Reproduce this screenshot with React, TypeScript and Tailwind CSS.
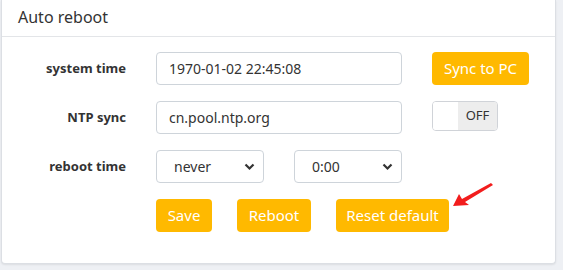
import React, { useState } from "react";

const font = { fontFamily: '"Noto Sans", "Open Sans", "Liberation Sans", sans-serif' };

function Chevron() {
  return (
    <svg width="11" height="8" viewBox="0 0 11 8" className="pointer-events-none absolute right-[9px] top-[13px]">
      <path d="M1.5 1.5 L5.5 5.5 L9.5 1.5" fill="none" stroke="#333" strokeWidth="2.2" />
    </svg>
  );
}

function Select({ value, options, width, pad }: { value: string; options: string[]; width: string; pad: string }) {
  const [v, setV] = useState(value);
  return (
    <div className={`relative ${width} h-[33px]`}>
      <select
        value={v}
        onChange={(e) => setV(e.target.value)}
        className={`h-full w-full appearance-none rounded border border-[#ced4da] bg-white ${pad} text-[14px] text-[#333] outline-none`}
      >
        {options.map((o) => (
          <option key={o}>{o}</option>
        ))}
      </select>
      <Chevron />
    </div>
  );
}

function Label({ children }: { children: React.ReactNode }) {
  return <div className="w-[124px] text-right text-[13px] font-bold text-[#333]">{children}</div>;
}

export default function App() {
  const [ntp, setNtp] = useState(false);
  return (
    <div className="min-h-[270px] w-[563px] bg-[#eef0f4] pl-[1px] pr-[7px]" style={font}>
      <div className="relative h-[264px] rounded-b border border-t-0 border-[#dcdfe4] bg-white shadow-[0_1px_2px_rgba(0,0,0,0.08)]">
        <div className="flex h-[37px] items-center border-b border-[#e3e5e8] pl-[16px] pb-[2px] text-[16px] text-[#333]">
          Auto reboot
        </div>
        <div className="flex flex-col gap-[16px] pt-[15px]">
          <div className="flex items-center">
            <Label>system time</Label>
            <input
              defaultValue="1970-01-02 22:45:08"
              className="ml-[30px] h-[33px] w-[246px] rounded border border-[#ced4da] px-[12px] text-[14px] text-[#333] outline-none"
            />
            <button className="ml-[30px] h-[33px] w-[97px] rounded bg-[#ffb900] text-[15px] text-white">Sync to PC</button>
          </div>
          <div className="flex items-center">
            <Label>NTP sync</Label>
            <input
              defaultValue="cn.pool.ntp.org"
              className="ml-[30px] h-[33px] w-[246px] rounded border border-[#ced4da] px-[12px] text-[14px] text-[#333] outline-none"
            />
            <button
              onClick={() => setNtp(!ntp)}
              className="ml-[30px] flex h-[30px] w-[66px] self-start overflow-hidden rounded border border-[#d0d3d8]"
            >
              <span className="h-full w-[25px] bg-white" />
              <span className="flex h-full flex-1 items-center justify-center bg-[#ededed] text-[13px] text-[#333]">
                {ntp ? "ON" : "OFF"}
              </span>
            </button>
          </div>
          <div className="flex items-center">
            <Label>reboot time</Label>
            <div className="ml-[30px] flex gap-[30px]">
              <Select value="never" options={["never", "daily", "weekly"]} width="w-[108px]" pad="pl-[17px]" />
              <Select value="0:00" options={["0:00", "1:00", "2:00", "3:00"]} width="w-[108px]" pad="pl-[17px]" />
            </div>
          </div>
          <div className="ml-[154px] flex gap-[25px]">
            <button className="h-[33px] w-[56px] rounded bg-[#ffb900] text-[15px] text-white">Save</button>
            <button className="h-[33px] w-[74px] rounded bg-[#ffb900] text-[15px] text-white">Reboot</button>
            <button className="h-[33px] w-[113px] rounded bg-[#ffb900] text-[15px] text-white">Reset default</button>
          </div>
        </div>
        <svg width="50" height="30" viewBox="0 0 50 30" className="absolute left-[447px] top-[180px]">
          <polygon points="4,26 10,14 13,19 42,3 44,5 16,22 20,25" fill="#f21d1d" />
        </svg>
      </div>
    </div>
  );
}
